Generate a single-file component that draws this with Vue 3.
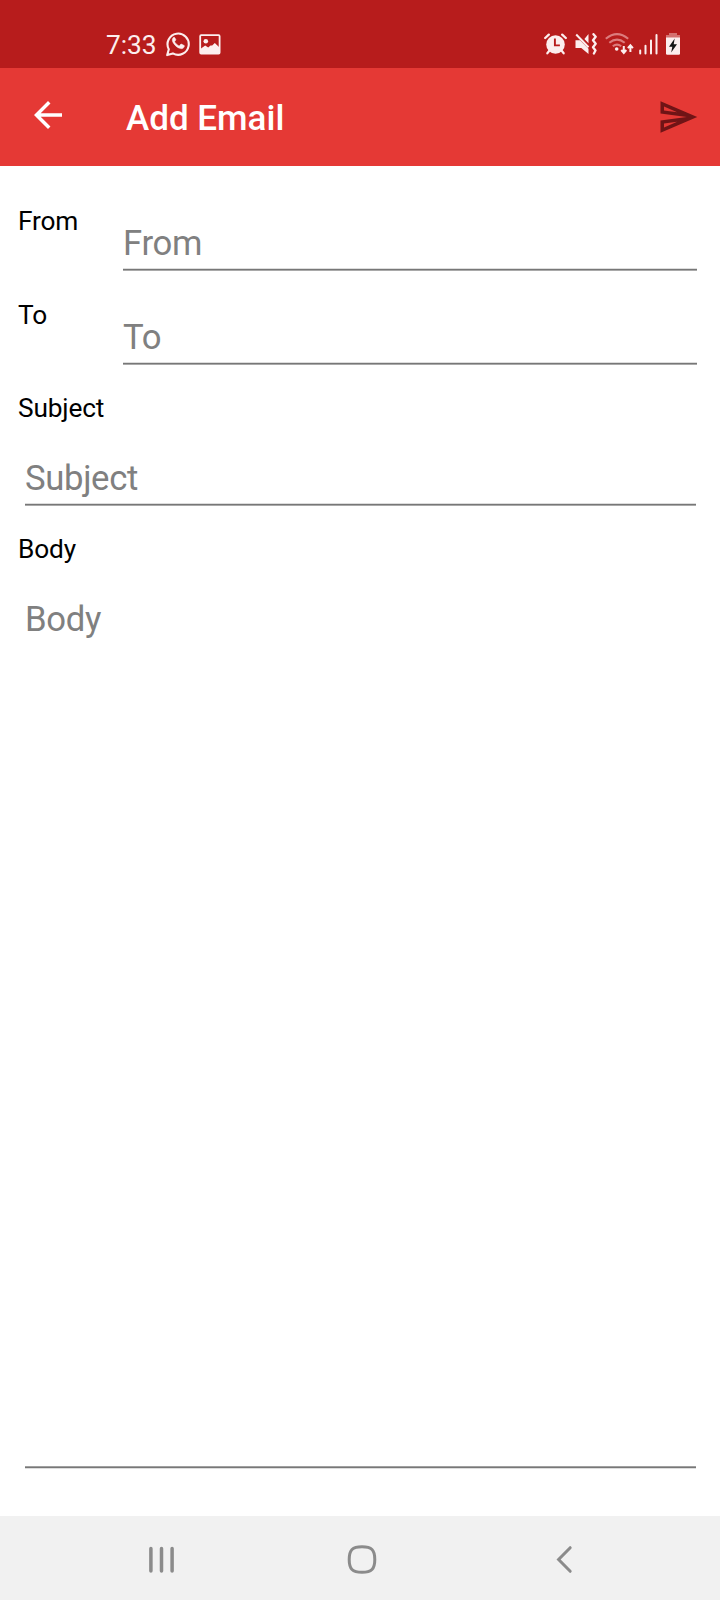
<script setup>
const addressFields = ['From', 'To']
</script>

<template>
  <div class="screen">
    <div class="status">
      <span class="time">7:33</span>
      <svg class="whatsapp" width="24" height="26" viewBox="0 0 24 26">
        <path d="M1.2 24.1 2.800 18.200A10.600 10.600 0 1 1 6.900 22.400Z" fill="none" stroke="currentColor" stroke-width="2.100" stroke-linejoin="round" />
        <path d="M8.700 6.600c-.4-.5-1-.4-1.500.1-1.200 1.300-1.200 3.100.1 5.200 1.800 2.900 4.200 4.900 7.400 5.700 1.700.4 3.100-.6 3.600-2 .2-.7.1-1.100-.5-1.400l-2.100-1c-.5-.2-.9-.1-1.200.3l-.8 1c-.3.300-.6.400-1 .2-1.700-.8-3-2-3.900-3.600-.2-.4-.1-.7.200-1l.7-.9c.2-.3.200-.5.1-.8Z" fill="currentColor" stroke="currentColor" stroke-width=".5" />
      </svg>
      <svg class="picture" width="22" height="21" viewBox="0 0 22 21">
        <rect x="1.200" y="1.200" width="19.400" height="18.400" rx="1" fill="none" stroke="currentColor" stroke-width="1.800" />
        <circle cx="6.800" cy="7.200" r="2.300" fill="currentColor" />
        <path d="M2 14.500 6.200 11.500l3 2 2.300-2 1.700 0L15.800 9 20 13v6H2Z" fill="currentColor" />
      </svg>
      <div class="tray">
        <svg width="23" height="22" viewBox="0 0 23 22">
          <path d="m1.200 5 3.600-3.400M21.800 5l-3.600-3.400" stroke="currentColor" stroke-width="2.300" stroke-linecap="round" />
          <path d="m5.500 17.500-2.200 2.800M17.500 17.500l2.200 2.800" stroke="currentColor" stroke-width="2.200" stroke-linecap="round" />
          <circle cx="11.500" cy="11.500" r="9.300" fill="currentColor" />
          <path d="M10.900 5.500v6.900h5" fill="none" stroke="#b71c1c" stroke-width="1.900" />
        </svg>
        <svg width="22" height="22" viewBox="0 0 22 22">
          <path d="M.5 7.300h4.500l8.500 8.400V21L6.300 15H.5ZM13.500 1v9.200L9.400 6Z" fill="currentColor" />
          <path d="m1.200 1.500 12.300 12.700" stroke="currentColor" stroke-width="2" />
          <path d="m18.500 1.200 2.200 2.600-2.700 3.500 2.700 3.500-2.700 3.500 2.500 3.200-1.600 3" fill="none" stroke="currentColor" stroke-width="2.300" stroke-linejoin="round" stroke-linecap="round" />
        </svg>
        <svg width="29" height="22" viewBox="0 0 29 22">
          <g fill="none" stroke="#dc7c7d" stroke-width="2.100">
            <path d="M.8 5.700Q12 -3.400 23.200 5.700" />
            <path d="M4.300 9.700Q12 3.500 19.700 9.700" />
            <path d="M7.800 13.300Q12 9.800 16.200 13.300" />
          </g>
          <circle cx="11.700" cy="16" r="1.800" fill="currentColor" />
          <path d="M18.800 13v7m-2.500-3 2.500 3 2.500-3M25.400 19v-7m-2.500 3.200 2.500-3 2.500 3" fill="none" stroke="currentColor" stroke-width="2" />
        </svg>
        <svg width="19" height="22" viewBox="0 0 19 22">
          <path d="M1.200 17.500v3M6.500 12.800v7.700M12 7.600v12.900M17.500 2v18.500" stroke="currentColor" stroke-width="2" stroke-linecap="round" />
        </svg>
        <svg width="14" height="22" viewBox="0 0 14 22">
          <path d="M3 0h8v2h3v3H0V2h3Z" fill="#d4706f" />
          <path d="M0 4.500h14v16q0 1.200-1.200 1.200H1.200Q0 21.700 0 20.500Z" fill="currentColor" />
          <path d="M8.700 5.500 3 13.700h3.300L5.200 19.500 11 11.300H7.700Z" fill="#151515" />
        </svg>
      </div>
    </div>

    <header class="bar">
      <svg class="back" width="42" height="42" viewBox="0 0 24 24">
        <path d="M20 11H7.830l5.590-5.590L12 4l-8 8 8 8 1.410-1.410L7.830 13H20v-2z" fill="#fff" />
      </svg>
      <h1>Add Email</h1>
      <svg class="send" width="42" height="42" viewBox="0 0 24 24">
        <path d="M4.010 6.030l7.510 3.220-7.520-1 .010-2.220m7.500 8.720L4 17.970v-2.220l7.510-1M2.010 3L2 10l15 2-15 2 .010 7L23 12 2.010 3z" fill="#701416" />
      </svg>
    </header>

    <main class="form">
      <div v-for="name in addressFields" :key="name" class="row">
        <span class="label">{{ name }}</span>
        <div class="field"><span class="hint">{{ name }}</span></div>
      </div>
      <section class="block">
        <span class="label">Subject</span>
        <div class="field"><span class="hint">Subject</span></div>
      </section>
      <section class="block body">
        <span class="label">Body</span>
        <div class="field"><span class="hint">Body</span></div>
      </section>
    </main>

    <nav class="nav">
      <svg width="28" height="30" viewBox="0 0 28 30">
        <path d="M2.900 3.500v22.500M13.500 3.500v22.500M24.100 3.500v22.500" stroke="currentColor" stroke-width="3.500" stroke-linecap="round" />
      </svg>
      <svg class="home" width="30" height="30" viewBox="0 0 30 30">
        <path d="M15 1.700c9.600 0 12.800 3.200 12.800 12.800S24.600 27.300 15 27.300 2.200 24.100 2.200 14.500 5.400 1.700 15 1.700Z" fill="none" stroke="currentColor" stroke-width="3" />
      </svg>
      <svg width="18" height="30" viewBox="0 0 18 30">
        <path d="M15.200 2.700 3.600 14.500l11.600 11.800" fill="none" stroke="currentColor" stroke-width="3" stroke-linecap="round" />
      </svg>
    </nav>
  </div>
</template>

<style>
body {
  margin: 0;
}
</style>

<style scoped>
.screen {
  display: flex;
  flex-direction: column;
  width: 720px;
  height: 1600px;
  background: #fff;
  font-family: Roboto, sans-serif;
}
svg {
  display: block;
  flex: none;
}
.status {
  display: flex;
  align-items: flex-start;
  box-sizing: border-box;
  height: 68px;
  padding: 0 40px 0 106px;
  background: #b71c1c;
  color: #fceeee;
}
.time {
  width: 60px;
  margin-top: 30px;
  font-size: 26.250px;
  line-height: 30px;
}
.whatsapp {
  margin-top: 31px;
}
.picture {
  margin: 34px 0 0 9px;
}
.tray {
  display: flex;
  gap: 8px;
  margin: 33px 0 0 auto;
}
.tray svg:nth-child(4) {
  margin-left: -3px;
}
.bar {
  display: flex;
  align-items: center;
  box-sizing: border-box;
  height: 98px;
  padding: 0 21px 0 27px;
  background: #e53935;
}
.back {
  margin-top: -4px;
}
h1 {
  flex: 1;
  margin: 2px 0 0 57px;
  color: #fff;
  font-size: 35px;
  font-weight: 500;
  line-height: 41px;
}
.form {
  display: flex;
  flex: 1;
  flex-direction: column;
  padding: 22px 23px 47px 18px;
}
.row {
  display: flex;
  height: 94px;
}
.label {
  width: 105px;
  color: #000;
  font-size: 26.250px;
  letter-spacing: -0.150px;
  line-height: 31px;
}
.row .label {
  margin-top: 18px;
}
.field {
  border-bottom: 1px solid #a9a9a9;
  box-shadow: inset 0 -1px #777, inset 0 -2px #ddd;
}
.row .field {
  flex: 1;
  height: 48px;
  margin-top: 34px;
}
.hint {
  display: block;
  padding-top: 1px;
  color: #808080;
  font-size: 34.700px;
  letter-spacing: -0.350px;
  line-height: 41px;
}
.block {
  display: flex;
  flex-direction: column;
  box-sizing: border-box;
  height: 141px;
  padding-top: 17px;
}
.block .field {
  height: 48px;
  margin: 33px 1px 0 7px;
}
.body {
  flex: 1;
}
.body .field {
  flex: 1;
  border-color: #ddd;
  box-shadow: inset 0 -1px #777, inset 0 -2px #a0a0a0;
}
.nav {
  display: flex;
  align-items: center;
  justify-content: space-between;
  box-sizing: border-box;
  height: 84px;
  padding: 3px 147px 0 148px;
  background: #f1f1f1;
  color: #8b8b8b;
}
.home {
  margin-right: 8px;
}
</style>
